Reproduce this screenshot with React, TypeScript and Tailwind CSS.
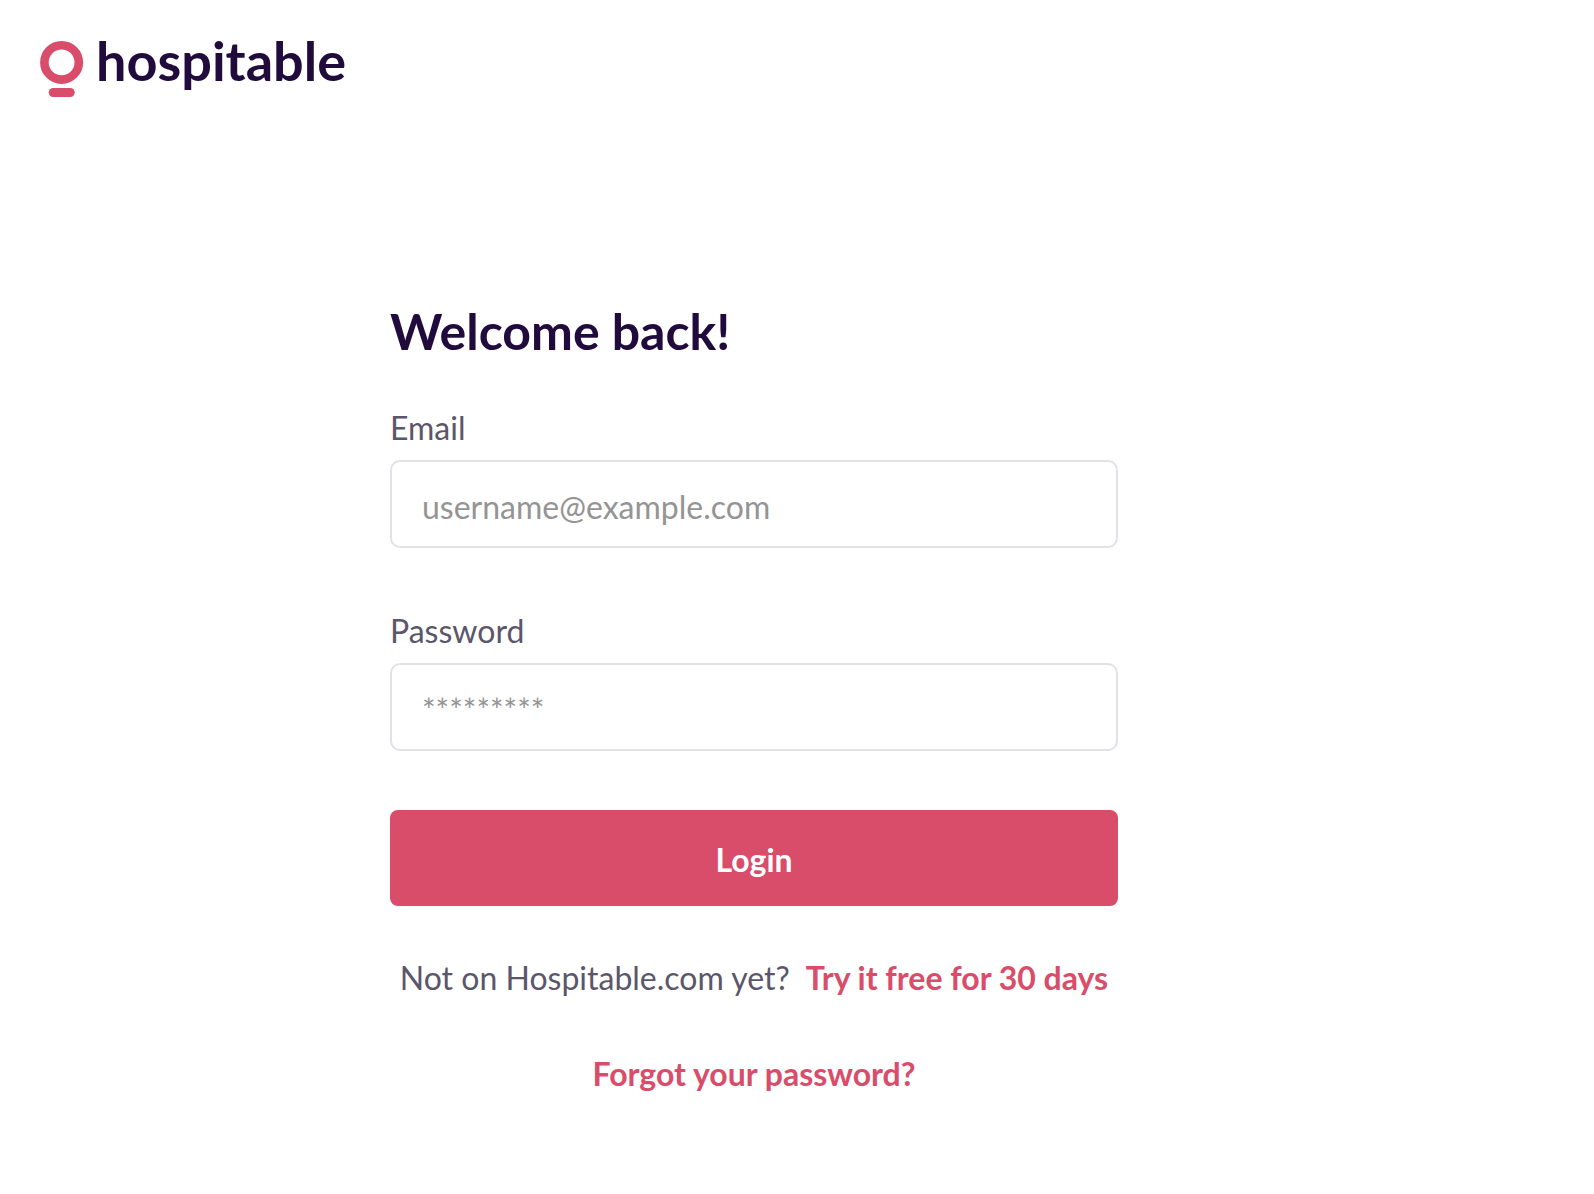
import React from 'react';

const Logo: React.FC = () => (
  <a href="#" className="inline-flex items-start gap-3 text-[#200b3c]">
    <svg className="w-11 h-[57px] text-[#d94c6a]" viewBox="0 0 44 57" fill="none">
      <circle cx="21.6" cy="22.4" r="17.2" stroke="currentColor" strokeWidth="8.6" />
      <rect x="8.7" y="48" width="26" height="9" rx="4.5" fill="currentColor" />
    </svg>
    <span className="text-[54px] leading-[42px] font-bold">hospitable</span>
  </a>
);

type FieldProps = {
  id: string;
  label: string;
  type: string;
  placeholder: string;
};

const Field: React.FC<FieldProps> = ({ id, label, type, placeholder }) => (
  <div>
    <label htmlFor={id} className="block mb-3 text-[32px] leading-10 text-[#5b566b]">
      {label}
    </label>
    <input
      id={id}
      name={id}
      type={type}
      placeholder={placeholder}
      className="block w-full h-[88px] px-[30px] pt-1 rounded-[10px] border-2 border-[#e2e1e8] bg-white text-[32px] text-[#200b3c] placeholder:text-[#949494] outline-none"
    />
  </div>
);

const App: React.FC = () => {
  return (
    <div className="min-h-screen bg-white font-['Lato',sans-serif]">
      <header className="flex px-10 pt-10">
        <Logo />
      </header>

      <main className="flex justify-center pt-[202px] pb-16 pr-[86px]">
        <div className="w-full max-w-[728px]">
          <h1 className="text-[50px] leading-[64px] font-bold text-[#200b3c]">Welcome back!</h1>

          <form className="mt-[45px]" onSubmit={(e) => e.preventDefault()}>
            <div className="space-y-[63px]">
              <Field id="email" label="Email" type="email" placeholder="username@example.com" />
              <Field id="password" label="Password" type="password" placeholder="*********" />
            </div>
            <button
              type="submit"
              className="mt-[59px] block w-full h-24 pt-1 rounded-lg bg-[#d94c6a] text-[32px] font-bold text-white"
            >
              Login
            </button>
          </form>

          <div className="mt-[52px] space-y-14 text-center text-[32px] leading-10 text-[#5b566b]">
            <p className="flex justify-center gap-4 whitespace-nowrap">
              Not on Hospitable.com yet?
              <a href="#" className="font-bold text-[#d94c6a]">
                Try it free for 30 days
              </a>
            </p>
            <p>
              <a href="#" className="font-bold text-[#d94c6a]">
                Forgot your password?
              </a>
            </p>
          </div>
        </div>
      </main>
    </div>
  );
};

export default App;
